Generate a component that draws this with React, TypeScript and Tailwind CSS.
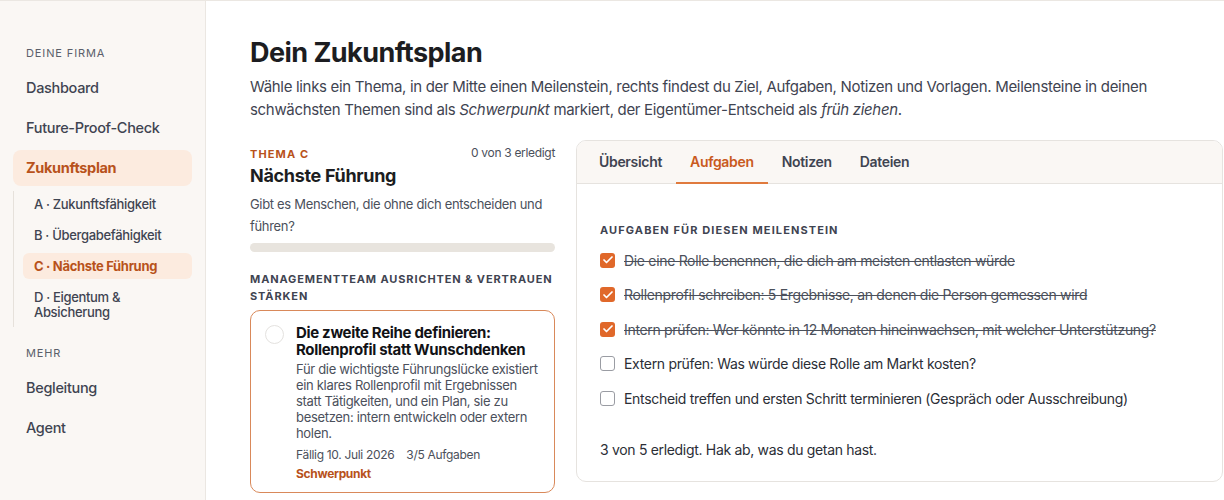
import React, { useState } from 'react';
import { Check } from 'lucide-react';

const themen = [
  { label: 'A · Zukunftsfähigkeit' },
  { label: 'B · Übergabefähigkeit' },
  { label: 'C · Nächste Führung', active: true },
  { label: 'D · Eigentum & Absicherung' },
];

const initialTasks = [
  { text: 'Die eine Rolle benennen, die dich am meisten entlasten würde', done: true },
  { text: 'Rollenprofil schreiben: 5 Ergebnisse, an denen die Person gemessen wird', done: true },
  { text: 'Intern prüfen: Wer könnte in 12 Monaten hineinwachsen, mit welcher Unterstützung?', done: true },
  { text: 'Extern prüfen: Was würde diese Rolle am Markt kosten?', done: false },
  { text: 'Entscheid treffen und ersten Schritt terminieren (Gespräch oder Ausschreibung)', done: false },
];

const tabs = ['Übersicht', 'Aufgaben', 'Notizen', 'Dateien'];

function Sidebar() {
  return (
    <aside className="w-[206px] shrink-0 bg-[#faf7f4] border-r border-[#ebe7e2] px-[13px] pt-[45px]">
      <p className="px-[13px] text-[11px] tracking-[0.08em] uppercase text-[#5b5f6a] leading-[14px]">Deine Firma</p>
      <nav className="mt-[10px] flex flex-col gap-[4px]">
        <a className="px-[13px] h-[36px] flex items-center text-[14.5px] font-medium text-[#3f4451]">Dashboard</a>
        <a className="px-[13px] h-[36px] flex items-center text-[14.5px] font-medium text-[#3f4451]">Future-Proof-Check</a>
        <a className="px-[13px] h-[36px] flex items-center text-[14.5px] font-bold text-[#b8521b] bg-[#fcebdf] rounded-[8px]">Zukunftsplan</a>
      </nav>
      <div className="mt-[5px] border-l border-[#e6e1db] pl-[9px] pb-[2px] flex flex-col gap-[5px]">
        {themen.map((t) => (
          <a
            key={t.label}
            className={
              t.active
                ? 'px-[11px] py-[5.5px] rounded-[6px] bg-[#fcebdf] text-[13px] font-bold text-[#b8521b] leading-[15px]'
                : 'px-[11px] py-[5.5px] text-[13px] font-medium text-[#3f4451] leading-[15px]'
            }
          >
            {t.label}
          </a>
        ))}
      </div>
      <p className="mt-[19px] px-[13px] text-[11px] tracking-[0.08em] uppercase text-[#5b5f6a] leading-[14px]">Mehr</p>
      <nav className="mt-[10px] flex flex-col gap-[4px]">
        <a className="px-[13px] h-[36px] flex items-center text-[14.5px] font-medium text-[#3f4451]">Begleitung</a>
        <a className="px-[13px] h-[36px] flex items-center text-[14.5px] font-medium text-[#3f4451]">Agent</a>
      </nav>
    </aside>
  );
}

function MilestoneColumn() {
  return (
    <div className="w-[305px] shrink-0 pt-[6px]">
      <div className="flex items-start justify-between">
        <p className="text-[11px] font-bold tracking-[0.1em] text-[#b8521b] leading-[14px] mt-[1px]">THEMA C</p>
        <p className="text-[12px] text-[#4b505b] leading-[14px]">0 von 3 erledigt</p>
      </div>
      <h2 className="mt-[3px] text-[18px] font-bold text-[#1c1d21] leading-[24px]">Nächste Führung</h2>
      <p className="mt-[5px] text-[13px] text-[#4b505b] leading-[22px] tracking-[-0.025em]">
        Gibt es Menschen, die ohne dich entscheiden und führen?
      </p>
      <div className="mt-[6px] h-[9px] rounded-full bg-[#e8e4de]" />
      <p className="mt-[19px] text-[11px] font-bold tracking-[0.08em] text-[#3f4451] leading-[17px]">
        MANAGEMENTTEAM AUSRICHTEN &amp; VERTRAUEN STÄRKEN
      </p>
      <div className="mt-[5px] border border-[#d9895a] rounded-[10px] pl-[14px] pr-[12px] pt-[13px] pb-[10px] flex gap-[12px] bg-white">
        <span className="mt-[1px] w-[19px] h-[19px] shrink-0 rounded-full border border-[#e4e2df]" />
        <div className="flex-1">
          <h3 className="text-[15px] font-bold text-[#111216] leading-[17px]">
            Die zweite Reihe definieren: Rollenprofil statt Wunschdenken
          </h3>
          <p className="mt-[3px] text-[13px] text-[#4b505b] leading-[16px]">
            Für die wichtigste Führungslücke existiert ein klares Rollenprofil mit Ergebnissen statt Tätigkeiten, und ein Plan, sie zu besetzen: intern entwickeln oder extern holen.
          </p>
          <div className="mt-[6px] flex gap-[12px] text-[12px] text-[#4b505b] leading-[16px]">
            <span>Fällig 10. Juli 2026</span>
            <span>3/5 Aufgaben</span>
          </div>
          <p className="mt-[3px] text-[12px] font-bold text-[#b8521b] leading-[16px]">Schwerpunkt</p>
        </div>
      </div>
    </div>
  );
}

function TaskPanel() {
  const [active, setActive] = useState('Aufgaben');
  const [tasks, setTasks] = useState(initialTasks);
  const doneCount = tasks.filter((t) => t.done).length;

  return (
    <section className="flex-1 border border-[#e6e3df] rounded-[10px] overflow-hidden bg-white h-[342px]">
      <div className="h-[43px] bg-[#faf7f4] border-b border-[#e6e3df] flex px-[8px]">
        {tabs.map((tab) => (
          <button
            key={tab}
            onClick={() => setActive(tab)}
            className={
              tab === active
                ? 'px-[14px] text-[14px] font-semibold text-[#c95a1d] border-b-2 border-[#e07a3d] -mb-px'
                : 'px-[14px] text-[14px] font-semibold text-[#3f4451] border-b-2 border-transparent'
            }
          >
            {tab}
          </button>
        ))}
      </div>
      <div className="px-[23px] pt-[39px]">
        <p className="text-[11px] font-bold tracking-[0.1em] text-[#3f4451] leading-[14px]">AUFGABEN FÜR DIESEN MEILENSTEIN</p>
        <ul className="mt-[13px] flex flex-col gap-[14.5px]">
          {tasks.map((t, i) => (
            <li key={i} className="flex items-center gap-[9px] h-[20px]">
              <button
                onClick={() => setTasks(tasks.map((x, j) => (j === i ? { ...x, done: !x.done } : x)))}
                className={
                  t.done
                    ? 'w-[15px] h-[15px] rounded-[3px] bg-[#e0682a] flex items-center justify-center shrink-0'
                    : 'w-[15px] h-[15px] rounded-[3px] border border-[#9a9ca3] bg-white shrink-0'
                }
              >
                {t.done && <Check className="w-[12px] h-[12px] text-white" strokeWidth={3.5} />}
              </button>
              <span
                className={
                  t.done
                    ? 'text-[14px] text-[#4b505b] line-through decoration-[#4b505b]'
                    : 'text-[14px] text-[#2b2e36]'
                }
              >
                {t.text}
              </span>
            </li>
          ))}
        </ul>
        <p className="mt-[32px] text-[14px] text-[#2b2e36] leading-[20px]">
          {doneCount} von {tasks.length} erledigt. Hak ab, was du getan hast.
        </p>
      </div>
    </section>
  );
}

export default function App() {
  return (
    <div
      className="h-[500px] w-[1224px] flex overflow-hidden bg-white border-t border-[#ebe7e2]"
      style={{ fontFamily: 'Inter, "Noto Sans", sans-serif', letterSpacing: '-0.02em' }}
    >
      <Sidebar />
      <main className="flex-1 pl-[44px] pr-[1px] pt-[34px]">
        <h1 className="text-[27px] font-bold text-[#1c1d21] leading-[36px] tracking-[-0.02em]">Dein Zukunftsplan</h1>
        <p className="mt-[4px] text-[15px] text-[#3f4451] leading-[23px] pr-[20px]">
          Wähle links ein Thema, in der Mitte einen Meilenstein, rechts findest du Ziel, Aufgaben, Notizen und Vorlagen. Meilensteine in deinen schwächsten Themen sind als <em>Schwerpunkt</em> markiert, der Eigentümer-Entscheid als <em>früh ziehen</em>.
        </p>
        <div className="mt-[19px] flex items-start gap-[21px]">
          <MilestoneColumn />
          <TaskPanel />
        </div>
      </main>
    </div>
  );
}
